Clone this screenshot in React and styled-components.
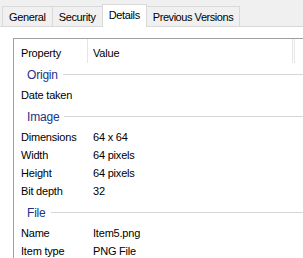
import React from 'react';
import styled, { createGlobalStyle } from 'styled-components';

const GlobalStyle = createGlobalStyle`
  body {
    margin: 0;
    background: #f0f0f0;
    font-family: "Liberation Sans", Arial, sans-serif;
    font-size: 11px;
    letter-spacing: -0.2px;
  }
`;

const Window = styled.div`
  width: 303px;
  height: 258px;
  overflow: hidden;
  display: flex;
  flex-direction: column;
`;

const TabStrip = styled.div`
  display: flex;
  align-items: flex-end;
  height: 27px;
  padding-left: 3px;
  border-bottom: 1px solid #d9d9d9;
  box-sizing: border-box;
  flex-shrink: 0;
`;

const Tab = styled.div`
  box-sizing: border-box;
  height: ${(p) => (p.$active ? '23px' : '20px')};
  margin-bottom: ${(p) => (p.$active ? '-1px' : '0')};
  padding: ${(p) => (p.$active ? '0 6px 2px' : '1px 6px 0')};
  display: flex;
  align-items: center;
  background: ${(p) => (p.$active ? '#fff' : '#f0f0f0')};
  border: 1px solid #d9d9d9;
  border-bottom: none;
  margin-left: -1px;
  color: #000;
  letter-spacing: ${(p) => (p.$tight ? '-0.45px' : '-0.35px')};
  white-space: nowrap;
  position: relative;
  z-index: ${(p) => (p.$active ? 1 : 0)};
`;

const Panel = styled.div`
  flex: 1;
  background: #fff;
  padding: 11px 0 0 13px;
`;

const ListBox = styled.div`
  border-top: 1px solid #a0a0a0;
  border-left: 1px solid #a0a0a0;
  width: 320px;
  height: 260px;
  background: #fff;
`;

const HeaderRow = styled.div`
  display: flex;
  height: 24px;
  align-items: stretch;
`;

const HeaderCell = styled.div`
  box-sizing: border-box;
  width: ${(p) => p.$width}px;
  padding: 3px 0 0 ${(p) => p.$pad}px;
  display: flex;
  align-items: center;
  border-right: 1px solid #e5e5e5;
  color: #000;
`;

const GroupRow = styled.div`
  display: flex;
  align-items: center;
  height: 21px;
  margin-top: ${(p) => (p.$first ? '1px' : '3px')};
  padding-left: 13px;
  width: 286px;
  color: #1e3287;
  font-size: 12px;
`;

const GroupLine = styled.div`
  flex: 1;
  height: 1px;
  margin-left: 5px;
  background: #d6d6d6;
`;

const ItemRow = styled.div`
  display: flex;
  align-items: center;
  box-sizing: border-box;
  height: 18px;
  padding-top: 1px;
`;

const Cell = styled.div`
  box-sizing: border-box;
  width: ${(p) => p.$width}px;
  padding-left: ${(p) => p.$pad}px;
  white-space: nowrap;
  color: #000;
`;

const groups = [
  { title: 'Origin', items: [['Date taken', '']] },
  {
    title: 'Image',
    items: [
      ['Dimensions', '64 x 64'],
      ['Width', '64 pixels'],
      ['Height', '64 pixels'],
      ['Bit depth', '32'],
    ],
  },
  {
    title: 'File',
    items: [
      ['Name', 'Item5.png'],
      ['Item type', 'PNG File'],
    ],
  },
];

const tabs = ['General', 'Security', 'Details', 'Previous Versions'];

export default function App() {
  return (
    <>
      <GlobalStyle />
      <Window>
        <TabStrip>
          {tabs.map((t) => (
            <Tab key={t} $active={t === 'Details'} $tight={t.length > 10}>
              {t}
            </Tab>
          ))}
        </TabStrip>
        <Panel>
          <ListBox>
            <HeaderRow>
              <HeaderCell $width={74} $pad={7}>Property</HeaderCell>
              <HeaderCell $width={205} $pad={5}>Value</HeaderCell>
              <HeaderCell $width={2} $pad={0} />
            </HeaderRow>
            {groups.map((g, i) => (
              <React.Fragment key={g.title}>
                <GroupRow $first={i === 0}>
                  {g.title}
                  <GroupLine />
                </GroupRow>
                {g.items.map(([name, value]) => (
                  <ItemRow key={name}>
                    <Cell $width={74} $pad={7}>{name}</Cell>
                    <Cell $width={205} $pad={5}>{value}</Cell>
                  </ItemRow>
                ))}
              </React.Fragment>
            ))}
          </ListBox>
        </Panel>
      </Window>
    </>
  );
}
